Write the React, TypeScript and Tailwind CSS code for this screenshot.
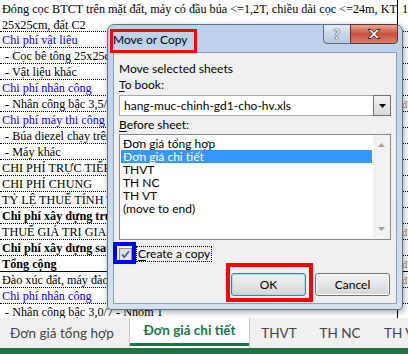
const sheetRows: { text: string; cls?: string; solid?: boolean; side?: string }[] = [
  { text: "Chi phí vật liệu", cls: "text-[#0000ff]" },
  { text: " - Cọc bê tông 25x25cm, mác 300" },
  { text: " - Vật liệu khác" },
  { text: "Chi phí nhân công", cls: "text-[#0000ff]" },
  { text: " - Nhân công bậc 3,5/7 - Nhóm 1", side: "đ" },
  { text: "Chi phí máy thi công", cls: "text-[#0000ff]" },
  { text: " - Búa diezel chạy trên ray 1,2T" },
  { text: " - Máy khác" },
  { text: "CHI PHÍ TRỰC TIẾP" },
  { text: "CHI PHÍ CHUNG" },
  { text: "TỶ LỆ THUẾ TÍNH TRƯỚC" },
  { text: "Chi phí xây dựng trước thuế", cls: "font-bold" },
  { text: "THUẾ GIÁ TRỊ GIA TĂNG", side: "đ" },
  { text: "Chi phí xây dựng sau thuế", cls: "font-bold" },
  { text: "Tổng cộng", cls: "font-bold", solid: true, side: "đ" },
  { text: "Đào xúc đất, máy đào <=1,25m3, đất C2", side: "đ" },
  { text: "Chi phí nhân công", cls: "text-[#0000ff]" },
  { text: " - Nhân công bậc 3,0/7 - Nhóm 1" },
];

const sheets = ["Đơn giá tổng hợp", "Đơn giá chi tiết", "THVT", "TH NC", "TH VT", "(move to end)"];

function Sheet() {
  return (
    <div className="h-[318px] overflow-hidden bg-white font-['Liberation_Serif',serif] text-[12.2px] text-black">
      <div className="flex h-[32px] border-b border-dotted border-black">
        <div className="w-[398px] shrink-0 border-r border-black pl-[2px] pt-px leading-[16px] whitespace-nowrap overflow-hidden">
          <div>Đóng cọc BTCT trên mặt đất, máy có đầu búa &lt;=1,2T, chiều dài cọc &lt;=24m, KT</div>
          <div>25x25cm, đất C2</div>
        </div>
        <div className="pl-[4px] pt-px leading-[16px]">1</div>
      </div>
      {sheetRows.map((r, i) => (
        <div
          key={i}
          className={`flex h-[16px] border-b border-black ${r.solid ? "border-solid" : "border-dotted"}`}
        >
          <div className={`w-[398px] shrink-0 border-r border-black pl-[2px] leading-[16px] whitespace-pre overflow-hidden ${r.cls ?? ""}`}>
            {r.text}
          </div>
          <div className="pl-[4px] leading-[16px] text-[#d2771e] text-[11px]">{r.side}</div>
        </div>
      ))}
    </div>
  );
}

function TabBar() {
  return (
    <div className="h-[30px] flex items-stretch bg-[#f0f0f0] text-[13.5px] text-[#444] font-['Lato',sans-serif] whitespace-nowrap overflow-hidden">
      <div className="w-[129px] shrink-0 flex items-center pl-[10px]">Đơn giá tổng hợp</div>
      <div className="w-[121px] shrink-0 flex flex-col bg-white border-x border-[#c6c6c6]">
        <div className="flex-1 flex items-center justify-center font-bold text-[#217346]">Đơn giá chi tiết</div>
        <div className="h-[3px] bg-[#217346] mb-[2px]" />
      </div>
      <div className="w-[58px] shrink-0 flex items-center justify-center">THVT</div>
      <div className="w-px my-[4px] bg-[#c6c6c6]" />
      <div className="w-[64px] shrink-0 flex items-center justify-center">TH NC</div>
      <div className="w-px my-[4px] bg-[#c6c6c6]" />
      <div className="shrink-0 flex items-center pl-[12px]">TH VT</div>
    </div>
  );
}

function CaptionButtons() {
  return (
    <div className="flex -mt-px">
      <div className="w-[28px] h-[20px] flex items-center justify-center rounded-bl-[4px] border border-[#5b6a7d] bg-gradient-to-b from-[#e3ecf6] via-[#c8d7e8] to-[#b5c9df] text-[13px] font-bold leading-none text-white [text-shadow:0_0_1px_#2c3a4c,0_0_1px_#2c3a4c,0_0_1px_#2c3a4c]">
        ?
      </div>
      <div className="w-[48px] h-[20px] -ml-px flex items-center justify-center rounded-br-[4px] border border-[#5b3631] bg-gradient-to-b from-[#e9a99a] via-[#c7503c] to-[#d9826d]">
        <svg width="16" height="12" viewBox="0 0 16 12">
          <path
            d="M2 1.5h3.2L8 4.3l2.8-2.8H14L9.6 6l4.4 4.5h-3.2L8 7.7l-2.8 2.8H2L6.4 6z"
            fill="#ffffff"
            stroke="#3b2622"
            strokeWidth="1"
            strokeLinejoin="round"
          />
        </svg>
      </div>
    </div>
  );
}

function Dialog() {
  return (
    <div className="absolute left-[107px] top-[24px] w-[296px] h-[286px] flex flex-col rounded-t-[7px] rounded-b-[4px] border border-[#617184] bg-gradient-to-b from-[#bcd2ea] to-[#d3e1f1] shadow-[1px_2px_6px_rgba(0,0,0,0.35)] font-['Lato',sans-serif] text-[12px] text-black">
      <div className="h-[27px] shrink-0 flex items-start justify-between pl-[5px] pr-[4px]">
        <span className="mt-[8px] leading-[14px]">Move or Copy</span>
        <CaptionButtons />
      </div>
      <div className="flex-1 mx-[5px] mb-[5px] flex flex-col border border-[#8ba0b8] bg-[#f0f0f0] px-[5px]">
        <div className="mt-[8px] leading-[16px]">Move selected sheets</div>
        <div className="leading-[16px]">
          <span className="underline underline-offset-2">T</span>o book:
        </div>
        <div className="mt-[2px] h-[21px] flex border border-[#a6a6a6] bg-white">
          <div className="flex-1 flex items-center pl-[4px]">hang-muc-chinh-gd1-cho-hv.xls</div>
          <div className="w-[18px] -my-px -mr-px flex items-center justify-center border border-[#707070] bg-gradient-to-b from-[#f3f3f3] to-[#dadada]">
            <svg width="7" height="4" viewBox="0 0 7 4">
              <path d="M0 0h7L3.5 4z" fill="#000" />
            </svg>
          </div>
        </div>
        <div className="mt-px leading-[16px]">
          <span className="underline underline-offset-2">B</span>efore sheet:
        </div>
        <div className="mt-px h-[106px] flex border border-[#828790] bg-white">
          <div className="flex-1 pt-[2px]">
            {sheets.map((s, i) => (
              <div
                key={s}
                className={`mx-px h-[13px] leading-[13px] pl-[2px] ${i === 1 ? "bg-[#3399ff] text-white" : ""}`}
              >
                {s}
              </div>
            ))}
          </div>
          <div className="w-[17px] flex flex-col items-center justify-between py-[8px] bg-[#f2f2f2]">
            <svg width="7" height="4" viewBox="0 0 7 4">
              <path d="M3.5 0L7 4H0z" fill="#a3a3a3" />
            </svg>
            <svg width="7" height="4" viewBox="0 0 7 4">
              <path d="M0 0h7L3.5 4z" fill="#a3a3a3" />
            </svg>
          </div>
        </div>
        <div className="mt-[6px] h-[16px] flex items-center">
          <div className="w-[13px] h-[13px] border border-[#8e8f8f] bg-gradient-to-br from-[#d4d9e2] to-[#eef0f4] flex items-center justify-center">
            <svg width="9" height="9" viewBox="0 0 9 9">
              <path d="M1 4.5l2.3 2.6L8 1.3" fill="none" stroke="#4b5d8a" strokeWidth="1.8" />
            </svg>
          </div>
          <div className="ml-[4px] px-px leading-[14px] border border-dotted border-black">
            <span className="underline underline-offset-2">C</span>reate a copy
          </div>
        </div>
        <div className="mt-[11px] flex justify-end gap-[9px] pr-px">
          <div className="w-[75px] h-[23px] flex items-center justify-center rounded-[3px] border border-[#3c7fb1] bg-gradient-to-b from-[#f2f2f2] via-[#e6e6e6] to-[#d4d4d4] shadow-[inset_0_0_0_1px_#9ee1f8]">
            OK
          </div>
          <div className="w-[75px] h-[23px] flex items-center justify-center rounded-[3px] border border-[#707070] bg-gradient-to-b from-[#f2f2f2] via-[#e6e6e6] to-[#d4d4d4] shadow-[inset_0_0_0_1px_#fcfcfc]">
            Cancel
          </div>
        </div>
      </div>
    </div>
  );
}

export default function App() {
  return (
    <div className="relative w-[408px] h-[354px] overflow-hidden bg-white flex flex-col">
      <Sheet />
      <TabBar />
      <div className="h-[6px] bg-[#217346]" />
      <Dialog />
      <div className="absolute left-[110px] top-[29px] w-[87px] h-[24px] border-[3px] border-[#ff0000]" />
      <div className="absolute left-[113px] top-[242px] w-[23px] h-[22px] border-[4px] border-[#0000ff]" />
      <div className="absolute left-[226px] top-[263px] w-[87px] h-[39px] border-[4px] border-[#ff0000]" />
    </div>
  );
}
